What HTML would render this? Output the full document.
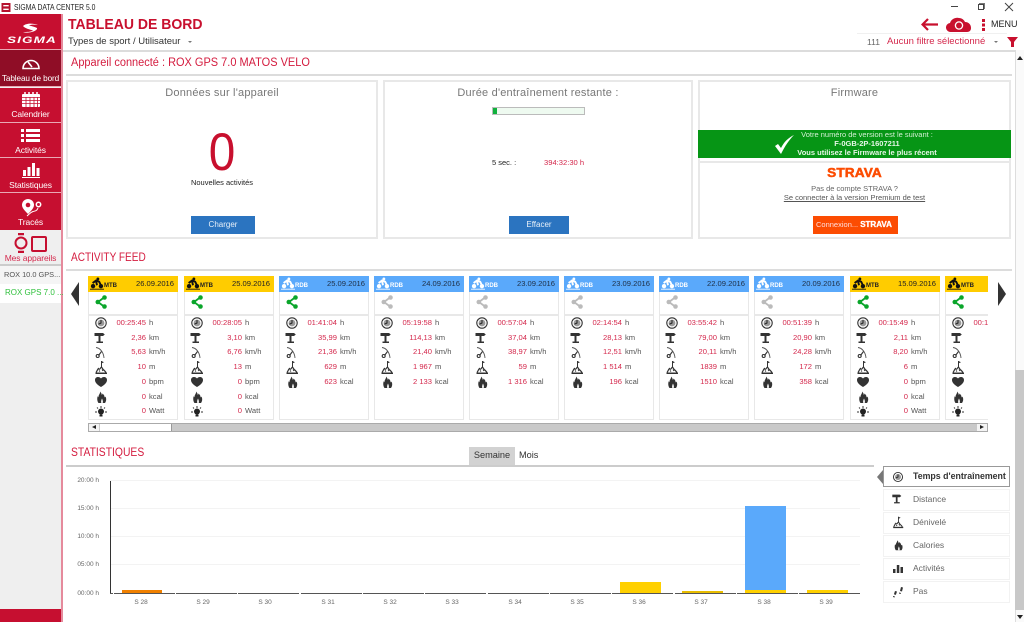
<!DOCTYPE html>
<html><head><meta charset="utf-8"><title>Sigma Data Center</title>
<style>
*{box-sizing:border-box}
html,body{margin:0;padding:0;width:1024px;height:622px;overflow:hidden;background:#fff;font-family:"Liberation Sans",sans-serif;color:#333}
.a{position:absolute}
.side{position:absolute;left:0;width:61px;background:#c60f30;color:#fff;font-size:8.5px;text-align:center;border-bottom:1px solid #e9a9b5}
.side span{position:absolute;left:0;right:0;bottom:2px;white-space:nowrap;letter-spacing:-.1px}
.side svg{position:absolute}
.panel{position:absolute;border:2px solid #e8e8e8;background:#fff}
.ptitle{position:absolute;left:0;right:0;top:5px;text-align:center;font-size:11px;color:#777;letter-spacing:.2px}
.btn{position:absolute;background:#2b74c0;color:#e8f0f8;font-size:8px;text-align:center;line-height:18px;height:18px;width:64px}
.hr{position:absolute;background:#dcdcdc;height:2px}
.h2{position:absolute;color:#d41c3f;font-size:11.5px;white-space:nowrap;transform-origin:0 0}
.card{position:absolute;top:0;width:90px;height:144px;border:1px solid #e8e8e8;border-top:0;background:#fff}
.card .hd{position:absolute;left:-1px;top:0;width:90px;height:16px;font-size:7.6px;color:#222}
.y{background:#ffcc00}.bl{background:#5aa9fb}
.bl .d{color:#1f2f45}
.hd .d{position:absolute;right:4px;top:3px}
.hd .t{position:absolute;left:16px;top:7px;font-size:6px;font-weight:bold}
.hd svg{position:absolute;left:2px;top:1px}
.sh{position:absolute;left:6px;top:19px}
.dv{position:absolute;left:-1px;width:90px;top:38px;height:2px;background:#e8e8e8}
.r{position:absolute;left:-1px;width:90px;height:14px;font-size:7.6px;line-height:14px}
.r svg{position:absolute;left:5px;top:-1px}
.r b{position:absolute;right:32px;font-weight:normal;color:#d4284c;white-space:nowrap}
.r i{position:absolute;left:61px;font-style:normal;color:#555;white-space:nowrap}
.r1{top:40px}.r2{top:55px}.r3{top:69px}.r4{top:84px}.r5{top:99px}.r6{top:114px}.r7{top:128px}
.yl{position:absolute;font-size:6.5px;color:#666;left:70px;width:29px;text-align:right}
.xl{position:absolute;font-size:6.5px;color:#666;top:599px;width:40px;text-align:center}
.gl{position:absolute;left:110px;width:750px;height:1px;background:#f3f3f3}
.base{position:absolute;top:592.5px;height:1.5px;background:#555;width:61px;z-index:2}
.m{position:absolute;left:883px;width:127px;height:22px;border:1px solid #f2f2f2;font-size:8.5px;color:#666;line-height:19px;padding-left:29px;background:#fff}
.m svg{position:absolute;left:7px;top:2px}
</style></head>
<body>
<svg width="0" height="0" style="position:absolute">
<defs>
<symbol id="clk" viewBox="0 0 16 16"><circle cx="8" cy="8" r="5.2" fill="none" stroke="#333" stroke-width="1.1"/><circle cx="8" cy="8" r="3.4" fill="#999"/><path d="M5.500 9.200L8 8V5" stroke="#222" stroke-width="1" fill="none"/></symbol>
<symbol id="sgn" viewBox="0 0 16 16"><path d="M1.500 3h8.500l1.800 1.500L10 6H7.500V11.500H10V13H3.500V11.500H5.500V6H1.500z" fill="#333"/></symbol>
<symbol id="gau" viewBox="0 0 16 16"><path d="M3 3.500C7 4 10.500 8 11 14" fill="none" stroke="#555" stroke-width=".9"/><path d="M5.500 11.500l3-4" stroke="#333" stroke-width="1.100"/><circle cx="4.700" cy="12" r="1.500" fill="none" stroke="#333" stroke-width="1.100"/></symbol>
<symbol id="ele" viewBox="0 0 16 16"><path d="M8.500 2v6" stroke="#333"/><path d="M8.500 2l2.500 1.200-2.500 1.200z" fill="#333"/><path d="M3 13.500c1-1 1.300-3 2.500-4 .7 1 1.200 1 1.800 0 .5-.8 1-1.500 1.200-1.500.8 1 1.300 2.300 2.300 3 .8.700 1.500 1.500 2.200 2.500" fill="none" stroke="#333" stroke-width="1.200"/><path d="M6 11.500l1 1M9 10.500l1 1.500" stroke="#333"/><path d="M2.500 13.500h11.500V15H2.500z" fill="#333"/></symbol>
<symbol id="hrt" viewBox="0 0 16 16"><path d="M8 13C4 10.500 2 8.500 2 6c0-2 1.500-3 3-3 1.200 0 2.300.500 3 1.500C8.700 3.500 9.800 3 11 3c1.500 0 3 1 3 3 0 2.500-2 4.500-6 7z" fill="#333"/></symbol>
<symbol id="flm" viewBox="0 0 16 16"><path d="M7 2.500c.5 2-1.500 3-1.500 5.500 0 .5-.5-.5-.8-.8C4 9 4 12 5.500 14h6.500c1.500-2 1.500-4.500.5-6.500-.3 1-1 1-1 .2 0-1.500-1.200-2.200-1.800-3.200-.3 1-1 1.500-1 1.500C9 5 8 3.500 7 2.500z" fill="#333"/><path d="M8.300 14c-.5-1.500 0-3 .7-4.500.7 1.500 1.200 3 .7 4.500z" fill="#fff"/></symbol>
<symbol id="blb" viewBox="0 0 16 16"><circle cx="8" cy="8.500" r="3" fill="#222"/><path d="M6.500 11.500h3v2h-3z" fill="#222"/><path d="M8 3v2M4 4.500l1 1M12 4.500l-1 1M2 9h2M12 9h2" stroke="#333" stroke-width="1"/></symbol>
<symbol id="bk" viewBox="0 0 16 14"><circle cx="3.500" cy="10" r="2.500" fill="#111"/><circle cx="12.500" cy="10" r="2.500" fill="#111"/><circle cx="9" cy="1.800" r="1.600" fill="#111"/><path d="M3 6.500L7 3.500l3.500 1.500 1.500 3M7 4.500L8 9" stroke="#111" stroke-width="2.200" fill="none"/><path d="M0 13h16v1H0z" fill="#111"/></symbol>
<symbol id="bkw" viewBox="0 0 16 14"><circle cx="3.500" cy="10" r="2.500" fill="#fff"/><circle cx="12.500" cy="10" r="2.500" fill="#fff"/><circle cx="9" cy="1.800" r="1.600" fill="#fff"/><path d="M3 6.500L7 3.500l3.500 1.500 1.500 3M7 4.500L8 9" stroke="#fff" stroke-width="2.200" fill="none"/><path d="M0 13h16v1H0z" fill="#fff"/></symbol>
<symbol id="shg" viewBox="0 0 12 14"><path d="M9 2.500L3 7l6 4.500" stroke="#0aa52a" stroke-width="1.800" fill="none"/><circle cx="9.500" cy="2.500" r="2.300" fill="#0aa52a"/><circle cx="2.800" cy="7" r="2.300" fill="#0aa52a"/><circle cx="9.500" cy="11.500" r="2.300" fill="#0aa52a"/></symbol>
<symbol id="shx" viewBox="0 0 12 14"><path d="M9 2.500L3 7l6 4.500" stroke="#bbb" stroke-width="1.800" fill="none"/><circle cx="9.500" cy="2.500" r="2.300" fill="#bbb"/><circle cx="2.800" cy="7" r="2.300" fill="#bbb"/><circle cx="9.500" cy="11.500" r="2.300" fill="#bbb"/></symbol>
</defs></svg>

<!-- title bar -->
<svg class="a" style="left:1px;top:3px" width="10" height="9" viewBox="0 0 10 10"><rect width="10" height="10" fill="#b5122e"/><path d="M2 3h6M2 7h6" stroke="#fff" stroke-width="1.500"/></svg>
<div class="a" style="left:14px;top:2px;font-size:8.300px;color:#222;white-space:nowrap;transform:scaleX(.82);transform-origin:0 0">SIGMA DATA CENTER 5.0</div>
<div class="a" style="left:951px;top:6px;width:7px;height:1px;background:#444"></div>
<div class="a" style="left:978px;top:4px;width:6px;height:6px;border:1px solid #444;box-shadow:1px -1px 0 #777"></div>
<svg class="a" style="left:1004px;top:2px" width="10" height="10"><path d="M1 1l8 8M9 1L1 9" stroke="#444"/></svg>

<!-- sidebar -->
<div class="a" style="left:0;top:14px;width:61px;height:608px;background:#efefef"></div>
<div class="a" style="left:61px;top:14px;width:2px;height:608px;background:#e58a9c"></div>
<div class="side" style="top:14px;height:36px">
<svg style="left:21px;top:8px" width="19" height="12" viewBox="0 0 19 12"><path d="M2 4c3-3 10-3 15-1-4-.5-7-.5-9 .5 3 .5 6 1.500 8 2.500 1 3-9 6-14 4 4 0 8 0 10-1.500-3-1-8-2-10-4.500z" fill="#fff"/></svg>
<div class="a" style="left:7px;top:21px;font-size:9.500px;font-weight:bold;font-style:italic;letter-spacing:.8px;transform:scaleX(1.420);transform-origin:0 0">SIGMA</div>
</div>
<div class="side" style="top:50px;height:37px;background:#8f0d26">
<svg style="left:21px;top:6px" width="20" height="14" viewBox="0 0 20 14"><path d="M2 12.500a8 8 0 0 1 16 0z" fill="none" stroke="#fff" stroke-width="1.600"/><path d="M7 6l4 5" stroke="#fff" stroke-width="1.600"/></svg>
<span style="bottom:3px;font-size:8.200px">Tableau de bord</span></div>
<div class="side" style="top:88px;height:35px">
<svg style="left:21px;top:4px" width="20" height="15" viewBox="0 0 20 15"><rect x="1" y="2" width="18" height="13" rx="1" fill="#fff"/><path d="M4 0v3M8 0v3M12 0v3M16 0v3" stroke="#fff" stroke-width="1.500"/><path d="M1 5.500h18M1 8.500h18M1 11.500h18M5 5v10M9 5v10M13 5v10M16.500 5v10" stroke="#c60f30" stroke-width=".8"/></svg>
<span style="bottom:3px">Calendrier</span></div>
<div class="side" style="top:123px;height:35px">
<svg style="left:21px;top:5px" width="19" height="14" viewBox="0 0 19 14"><path d="M0 1h3v3H0zM0 6h3v3H0zM0 11h3v3H0zM5 1h14v3H5zM5 6h14v3H5zM5 11h14v3H5z" fill="#fff"/></svg>
<span>Activités</span></div>
<div class="side" style="top:158px;height:35px">
<svg style="left:22px;top:4px" width="18" height="16" viewBox="0 0 18 16"><path d="M0 15h18v1H0zM1 8h3v6H1zM5.500 5h3v9h-3zM10 1h3v13h-3zM14.500 6h3v8h-3z" fill="#fff"/></svg>
<span>Statistiques</span></div>
<div class="side" style="top:193px;height:37px;border-bottom:0">
<svg style="left:20px;top:5px" width="22" height="20" viewBox="0 0 22 20"><path d="M8 1a6 6 0 0 1 6 6c0 3-3 6-6 9-3-3-6-6-6-9a6 6 0 0 1 6-6z" fill="#fff"/><circle cx="8" cy="7" r="2.300" fill="#c60f30"/><circle cx="18.500" cy="6.500" r="2.200" fill="none" stroke="#fff" stroke-width="1.500"/><path d="M18 10c-1 3-3 3-5 3.500-3 1-4 3-6 4.500" fill="none" stroke="#fff" stroke-width="1"/></svg>
<span style="bottom:3px">Tracés</span></div>
<div class="a" style="left:0;top:230px;width:61px;height:36px;background:#efefef;border-bottom:2px solid #ccc">
<svg class="a" style="left:14px;top:3px" width="34" height="20" viewBox="0 0 34 20"><circle cx="7" cy="10" r="5.500" fill="none" stroke="#c60f30" stroke-width="2"/><path d="M4 1h6M4 19h6" stroke="#c60f30" stroke-width="2.500"/><rect x="18" y="4" width="14" height="14" rx="1" fill="none" stroke="#c60f30" stroke-width="2"/></svg>
<div class="a" style="left:0;right:0;top:23px;text-align:center;font-size:8.500px;color:#d4284c;letter-spacing:-.1px;white-space:nowrap">Mes appareils</div>
</div>
<div class="a" style="left:0;top:266px;width:61px;height:18px;background:#f5f5f5;font-size:7.400px;line-height:18px;padding-left:4px;color:#555;white-space:nowrap">ROX 10.0 GPS...</div>
<div class="a" style="left:0;top:284px;width:61px;height:19px;background:#fff;font-size:8px;line-height:18px;padding-left:5px;color:#31c13e;white-space:nowrap">ROX GPS 7.0 ...</div>
<div class="a" style="left:0;top:609px;width:61px;height:13px;background:#c60f30"></div>

<!-- header -->
<div class="a" style="left:68px;top:16px;font-size:15px;font-weight:bold;color:#c8102e;white-space:nowrap;transform:scaleX(.935);transform-origin:0 0">TABLEAU DE BORD</div>
<div class="a" style="left:68px;top:36px;font-size:9.500px;color:#333;white-space:nowrap">Types de sport / Utilisateur</div>
<div class="a" style="left:188px;top:41px;width:0;height:0;border:2px solid transparent;border-top:2px solid #777"></div>
<svg class="a" style="left:921px;top:18px" width="17" height="13" viewBox="0 0 17 13"><path d="M7 1L1.500 6.500 7 12M2 6.500h15" fill="none" stroke="#c8102e" stroke-width="2.200"/></svg>
<svg class="a" style="left:946px;top:16px" width="26" height="17" viewBox="0 0 26 17"><path d="M5 16a4.500 4.500 0 0 1-1-9c1-4 6-6 9-5 3 0 5 2 6 4 4 0 6 3 6 6 0 2-1 4-4 4z" fill="#c8102e"/><circle cx="13" cy="9.500" r="3.600" fill="none" stroke="#fff" stroke-width="1.300"/></svg>
<div class="a" style="left:982px;top:19px;width:3px;height:3px;background:#c8102e;box-shadow:0 4.500px 0 #c8102e,0 9px 0 #c8102e"></div>
<div class="a" style="left:991px;top:19px;font-size:9px;color:#222">MENU</div>
<div class="a" style="left:857px;top:33px;width:150px;height:1px;background:#f0f0f0"></div>
<div class="a" style="left:867px;top:37px;font-size:8.500px;color:#666">111</div>
<div class="a" style="left:887px;top:36px;font-size:9.500px;line-height:11px;color:#d4284c;white-space:nowrap">Aucun filtre sélectionné</div>
<div class="a" style="left:994px;top:41px;width:0;height:0;border:2px solid transparent;border-top:2px solid #777"></div>
<svg class="a" style="left:1007px;top:37px" width="11" height="10" viewBox="0 0 11 10"><path d="M0 0h11L7 5v5H4V5z" fill="#c8102e"/></svg>
<div class="hr" style="left:63px;top:50px;width:952px"></div>

<!-- scrollbar -->
<div class="a" style="left:1015px;top:50px;width:9px;height:572px;background:#fafafa;border-left:1px solid #ddd"></div>
<div class="a" style="left:1015px;top:370px;width:9px;height:240px;background:#c8c8c8"></div>
<div class="a" style="left:1017px;top:53px;width:0;height:0;border:3px solid transparent;border-bottom:4px solid #222"></div>
<div class="a" style="left:1017px;top:615px;width:0;height:0;border:3px solid transparent;border-top:4px solid #222"></div>

<div class="h2" style="left:71px;top:57px;transform:scaleX(.955)">Appareil connecté : ROX GPS 7.0 MATOS VELO</div>
<div class="hr" style="left:66px;top:74px;width:946px"></div>

<!-- panels -->
<div class="panel" style="left:66px;top:80px;width:312px;height:159px">
<div class="ptitle">Données sur l'appareil</div>
<div class="a" style="left:0;right:0;top:41px;text-align:center;font-size:53px;line-height:60px;color:#c8102e;transform:scaleX(.9)">0</div>
<div class="a" style="left:0;right:0;top:96px;text-align:center;font-size:7.500px;color:#222">Nouvelles activités</div>
<div class="btn" style="left:123px;top:134px">Charger</div>
</div>
<div class="panel" style="left:383px;top:80px;width:310px;height:159px">
<div class="ptitle">Durée d'entraînement restante :</div>
<div class="a" style="left:107px;top:25px;width:93px;height:8px;background:#eefaf0;border:1px solid #bbb"><div style="width:4px;height:6px;background:#10b13c"></div></div>
<div class="a" style="left:107px;top:76px;font-size:7.500px;color:#222">5 sec. :</div>
<div class="a" style="left:159px;top:76px;font-size:7.600px;color:#d4284c;white-space:nowrap">394:32:30 h</div>
<div class="btn" style="left:124px;top:134px;width:60px">Effacer</div>
</div>
<div class="panel" style="left:698px;top:80px;width:313px;height:159px;border-bottom-width:1px"><div class="ptitle">Firmware</div></div>
<div class="a" style="left:698px;top:130px;width:313px;height:28px;background:#069515;color:#e6f6e6;font-size:7.500px;text-align:center;line-height:9px;padding:0 0 0 25px;white-space:nowrap">
<div style="color:#d4f0d4">Votre numéro de version est le suivant :</div><div style="font-weight:bold">F-0GB-2P-1607211</div><div style="font-weight:bold">Vous utilisez le Firmware le plus récent</div></div>
<svg class="a" style="left:774px;top:134px" width="21" height="20" viewBox="0 0 21 20"><path d="M1 12l3-2 3 4C10 8 14 4 20 1 15 6 11 12 7 20z" fill="#fff"/></svg>
<div class="panel" style="left:698px;top:161px;width:313px;height:78px">
<div class="a" style="left:0;right:0;top:2px;text-align:center;font-size:13px;line-height:15px;font-weight:bold;color:#fc4c02;-webkit-text-stroke:.5px #fc4c02;letter-spacing:.1px;transform:scaleX(1.050)">STRAVA</div>
<div class="a" style="left:0;right:0;top:21px;text-align:center;font-size:7.500px;color:#666">Pas de compte STRAVA ?</div>
<div class="a" style="left:0;right:0;top:30px;text-align:center;font-size:7.500px;color:#555;text-decoration:underline">Se connecter à la version Premium de test</div>
<div class="a" style="left:113px;top:53px;width:85px;height:18px;background:#fc4c02;color:#fdd;font-size:7.500px;line-height:18px;white-space:nowrap;padding-left:3px">Connexion... <b style="color:#fff;font-size:8px;-webkit-text-stroke:.3px #fff">STRAVA</b></div>
</div>

<!-- feed -->
<div class="h2" style="left:71px;top:252px;transform:scaleX(.875)">ACTIVITY FEED</div>
<div class="hr" style="left:66px;top:269px;width:946px"></div>
<div class="a" style="left:71px;top:282px;width:0;height:0;border:12px solid transparent;border-left:0;border-right:8px solid #333"></div>
<div class="a" style="left:998px;top:282px;width:0;height:0;border:12px solid transparent;border-right:0;border-left:8px solid #333"></div>

<div class="a" style="left:88px;top:276px;width:900px;height:145px;overflow:hidden">
<div class="card" style="left:0"><div class="hd y"><svg width="14" height="13"><use href="#bk"/></svg><span class="t">MTB</span><span class="d">26.09.2016</span></div><svg class="sh" width="12" height="14"><use href="#shg"/></svg><div class="dv"></div>
<div class="r r1"><svg width="16" height="16"><use href="#clk"/></svg><b>00:25:45</b><i>h</i></div>
<div class="r r2"><svg width="16" height="16"><use href="#sgn"/></svg><b>2,36</b><i>km</i></div>
<div class="r r3"><svg width="16" height="16"><use href="#gau"/></svg><b>5,63</b><i>km/h</i></div>
<div class="r r4"><svg width="16" height="16"><use href="#ele"/></svg><b>10</b><i>m</i></div>
<div class="r r5"><svg width="16" height="16"><use href="#hrt"/></svg><b>0</b><i>bpm</i></div>
<div class="r r6"><svg width="16" height="16"><use href="#flm"/></svg><b>0</b><i>kcal</i></div>
<div class="r r7"><svg width="16" height="16"><use href="#blb"/></svg><b>0</b><i>Watt</i></div></div>

<div class="card" style="left:96px"><div class="hd y"><svg width="14" height="13"><use href="#bk"/></svg><span class="t">MTB</span><span class="d">25.09.2016</span></div><svg class="sh" width="12" height="14"><use href="#shg"/></svg><div class="dv"></div>
<div class="r r1"><svg width="16" height="16"><use href="#clk"/></svg><b>00:28:05</b><i>h</i></div>
<div class="r r2"><svg width="16" height="16"><use href="#sgn"/></svg><b>3,10</b><i>km</i></div>
<div class="r r3"><svg width="16" height="16"><use href="#gau"/></svg><b>6,76</b><i>km/h</i></div>
<div class="r r4"><svg width="16" height="16"><use href="#ele"/></svg><b>13</b><i>m</i></div>
<div class="r r5"><svg width="16" height="16"><use href="#hrt"/></svg><b>0</b><i>bpm</i></div>
<div class="r r6"><svg width="16" height="16"><use href="#flm"/></svg><b>0</b><i>kcal</i></div>
<div class="r r7"><svg width="16" height="16"><use href="#blb"/></svg><b>0</b><i>Watt</i></div></div>

<div class="card" style="left:191px"><div class="hd bl"><svg width="14" height="13"><use href="#bkw"/></svg><span class="t" style="color:#fff">RDB</span><span class="d">25.09.2016</span></div><svg class="sh" width="12" height="14"><use href="#shg"/></svg><div class="dv"></div>
<div class="r r1"><svg width="16" height="16"><use href="#clk"/></svg><b>01:41:04</b><i>h</i></div>
<div class="r r2"><svg width="16" height="16"><use href="#sgn"/></svg><b>35,99</b><i>km</i></div>
<div class="r r3"><svg width="16" height="16"><use href="#gau"/></svg><b>21,36</b><i>km/h</i></div>
<div class="r r4"><svg width="16" height="16"><use href="#ele"/></svg><b>629</b><i>m</i></div>
<div class="r r5"><svg width="16" height="16"><use href="#flm"/></svg><b>623</b><i>kcal</i></div></div>

<div class="card" style="left:286px"><div class="hd bl"><svg width="14" height="13"><use href="#bkw"/></svg><span class="t" style="color:#fff">RDB</span><span class="d">24.09.2016</span></div><svg class="sh" width="12" height="14"><use href="#shx"/></svg><div class="dv"></div>
<div class="r r1"><svg width="16" height="16"><use href="#clk"/></svg><b>05:19:58</b><i>h</i></div>
<div class="r r2"><svg width="16" height="16"><use href="#sgn"/></svg><b>114,13</b><i>km</i></div>
<div class="r r3"><svg width="16" height="16"><use href="#gau"/></svg><b>21,40</b><i>km/h</i></div>
<div class="r r4"><svg width="16" height="16"><use href="#ele"/></svg><b>1 967</b><i>m</i></div>
<div class="r r5"><svg width="16" height="16"><use href="#flm"/></svg><b>2 133</b><i>kcal</i></div></div>

<div class="card" style="left:381px"><div class="hd bl"><svg width="14" height="13"><use href="#bkw"/></svg><span class="t" style="color:#fff">RDB</span><span class="d">23.09.2016</span></div><svg class="sh" width="12" height="14"><use href="#shx"/></svg><div class="dv"></div>
<div class="r r1"><svg width="16" height="16"><use href="#clk"/></svg><b>00:57:04</b><i>h</i></div>
<div class="r r2"><svg width="16" height="16"><use href="#sgn"/></svg><b>37,04</b><i>km</i></div>
<div class="r r3"><svg width="16" height="16"><use href="#gau"/></svg><b>38,97</b><i>km/h</i></div>
<div class="r r4"><svg width="16" height="16"><use href="#ele"/></svg><b>59</b><i>m</i></div>
<div class="r r5"><svg width="16" height="16"><use href="#flm"/></svg><b>1 316</b><i>kcal</i></div></div>

<div class="card" style="left:476px"><div class="hd bl"><svg width="14" height="13"><use href="#bkw"/></svg><span class="t" style="color:#fff">RDB</span><span class="d">23.09.2016</span></div><svg class="sh" width="12" height="14"><use href="#shx"/></svg><div class="dv"></div>
<div class="r r1"><svg width="16" height="16"><use href="#clk"/></svg><b>02:14:54</b><i>h</i></div>
<div class="r r2"><svg width="16" height="16"><use href="#sgn"/></svg><b>28,13</b><i>km</i></div>
<div class="r r3"><svg width="16" height="16"><use href="#gau"/></svg><b>12,51</b><i>km/h</i></div>
<div class="r r4"><svg width="16" height="16"><use href="#ele"/></svg><b>1 514</b><i>m</i></div>
<div class="r r5"><svg width="16" height="16"><use href="#flm"/></svg><b>196</b><i>kcal</i></div></div>

<div class="card" style="left:571px"><div class="hd bl"><svg width="14" height="13"><use href="#bkw"/></svg><span class="t" style="color:#fff">RDB</span><span class="d">22.09.2016</span></div><svg class="sh" width="12" height="14"><use href="#shx"/></svg><div class="dv"></div>
<div class="r r1"><svg width="16" height="16"><use href="#clk"/></svg><b>03:55:42</b><i>h</i></div>
<div class="r r2"><svg width="16" height="16"><use href="#sgn"/></svg><b>79,00</b><i>km</i></div>
<div class="r r3"><svg width="16" height="16"><use href="#gau"/></svg><b>20,11</b><i>km/h</i></div>
<div class="r r4"><svg width="16" height="16"><use href="#ele"/></svg><b>1839</b><i>m</i></div>
<div class="r r5"><svg width="16" height="16"><use href="#flm"/></svg><b>1510</b><i>kcal</i></div></div>

<div class="card" style="left:666px"><div class="hd bl"><svg width="14" height="13"><use href="#bkw"/></svg><span class="t" style="color:#fff">RDB</span><span class="d">20.09.2016</span></div><svg class="sh" width="12" height="14"><use href="#shx"/></svg><div class="dv"></div>
<div class="r r1"><svg width="16" height="16"><use href="#clk"/></svg><b>00:51:39</b><i>h</i></div>
<div class="r r2"><svg width="16" height="16"><use href="#sgn"/></svg><b>20,90</b><i>km</i></div>
<div class="r r3"><svg width="16" height="16"><use href="#gau"/></svg><b>24,28</b><i>km/h</i></div>
<div class="r r4"><svg width="16" height="16"><use href="#ele"/></svg><b>172</b><i>m</i></div>
<div class="r r5"><svg width="16" height="16"><use href="#flm"/></svg><b>358</b><i>kcal</i></div></div>

<div class="card" style="left:762px"><div class="hd y"><svg width="14" height="13"><use href="#bk"/></svg><span class="t">MTB</span><span class="d">15.09.2016</span></div><svg class="sh" width="12" height="14"><use href="#shg"/></svg><div class="dv"></div>
<div class="r r1"><svg width="16" height="16"><use href="#clk"/></svg><b>00:15:49</b><i>h</i></div>
<div class="r r2"><svg width="16" height="16"><use href="#sgn"/></svg><b>2,11</b><i>km</i></div>
<div class="r r3"><svg width="16" height="16"><use href="#gau"/></svg><b>8,20</b><i>km/h</i></div>
<div class="r r4"><svg width="16" height="16"><use href="#ele"/></svg><b>6</b><i>m</i></div>
<div class="r r5"><svg width="16" height="16"><use href="#hrt"/></svg><b>0</b><i>bpm</i></div>
<div class="r r6"><svg width="16" height="16"><use href="#flm"/></svg><b>0</b><i>kcal</i></div>
<div class="r r7"><svg width="16" height="16"><use href="#blb"/></svg><b>0</b><i>Watt</i></div></div>

<div class="card" style="left:857px"><div class="hd y"><svg width="14" height="13"><use href="#bk"/></svg><span class="t">MTB</span></div><svg class="sh" width="12" height="14"><use href="#shg"/></svg><div class="dv"></div>
<div class="r r1"><svg width="16" height="16"><use href="#clk"/></svg><b>00:15:49</b></div>
<div class="r r2"><svg width="16" height="16"><use href="#sgn"/></svg><b>2,11</b></div>
<div class="r r3"><svg width="16" height="16"><use href="#gau"/></svg><b>8,20</b></div>
<div class="r r4"><svg width="16" height="16"><use href="#ele"/></svg></div>
<div class="r r5"><svg width="16" height="16"><use href="#hrt"/></svg></div>
<div class="r r6"><svg width="16" height="16"><use href="#flm"/></svg></div>
<div class="r r7"><svg width="16" height="16"><use href="#blb"/></svg></div></div>
</div>

<!-- h scrollbar -->
<div class="a" style="left:88px;top:423px;width:900px;height:9px;background:#c9c9c9;border:1px solid #aaa"></div>
<div class="a" style="left:89px;top:424px;width:83px;height:7px;background:#fff;border-right:1px solid #999"></div>
<div class="a" style="left:89px;top:424px;width:11px;height:7px;background:#f4f4f4;border-right:1px solid #ccc"></div>
<div class="a" style="left:92px;top:425px;width:0;height:0;border:2.500px solid transparent;border-left:0;border-right:4px solid #222"></div>
<div class="a" style="left:977px;top:424px;width:10px;height:7px;background:#f4f4f4"></div>
<div class="a" style="left:980px;top:425px;width:0;height:0;border:2.500px solid transparent;border-right:0;border-left:4px solid #222"></div>

<!-- stats -->
<div class="h2" style="left:71px;top:447px;transform:scaleX(.9)">STATISTIQUES</div>
<div class="hr" style="left:66px;top:465px;width:808px;background:#ccc;height:1.500px"></div>
<div class="a" style="left:469px;top:447px;width:46px;height:18px;background:#d2d2d2;font-size:9.200px;line-height:17px;text-align:center;color:#333">Semaine</div>
<div class="a" style="left:519px;top:447px;font-size:9.200px;line-height:17px;color:#333">Mois</div>

<div class="yl" style="top:477px">20:00 h</div><div class="yl" style="top:505px">15:00 h</div><div class="yl" style="top:533px">10:00 h</div><div class="yl" style="top:561px">05:00 h</div><div class="yl" style="top:590px">00:00 h</div>
<div class="gl" style="top:480px"></div><div class="gl" style="top:508px"></div><div class="gl" style="top:536px"></div><div class="gl" style="top:564px"></div>
<div class="a" style="left:110px;top:481px;width:1.300px;height:113px;background:#333"></div>
<div class="base" style="left:110px;width:3px"></div>
<div class="base" style="left:114px"></div><div class="base" style="left:176px"></div><div class="base" style="left:238px"></div><div class="base" style="left:301px"></div><div class="base" style="left:363px"></div><div class="base" style="left:425px"></div><div class="base" style="left:488px"></div><div class="base" style="left:550px"></div><div class="base" style="left:612px"></div><div class="base" style="left:675px"></div><div class="base" style="left:737px"></div><div class="base" style="left:799px"></div>
<div class="a" style="left:122px;top:590px;width:40px;height:3px;background:#f08000"></div>
<div class="a" style="left:620px;top:582px;width:41px;height:11px;background:#ffd000"></div>
<div class="a" style="left:682px;top:591px;width:41px;height:2px;background:#e8bd00"></div>
<div class="a" style="left:745px;top:506px;width:41px;height:84px;background:#5aa9fb"></div>
<div class="a" style="left:745px;top:590px;width:41px;height:3px;background:#ffd000"></div>
<div class="a" style="left:807px;top:590px;width:41px;height:3px;background:#ffd000"></div>
<div class="xl" style="left:121px">S 28</div><div class="xl" style="left:183px">S 29</div><div class="xl" style="left:245px">S 30</div><div class="xl" style="left:308px">S 31</div><div class="xl" style="left:370px">S 32</div><div class="xl" style="left:432px">S 33</div><div class="xl" style="left:495px">S 34</div><div class="xl" style="left:557px">S 35</div><div class="xl" style="left:619px">S 36</div><div class="xl" style="left:681px">S 37</div><div class="xl" style="left:744px">S 38</div><div class="xl" style="left:806px">S 39</div>

<!-- right menu -->
<div class="a" style="left:877px;top:470px;width:0;height:0;border:7px solid transparent;border-left:0;border-right:6px solid #777"></div>
<div class="m" style="top:466px;height:21px;border:1px solid #999;color:#333;font-weight:bold;white-space:nowrap;font-size:8.800px;padding-left:29px"><svg width="14" height="14" style="left:7px;top:3px"><use href="#clk"/></svg>Temps d'entraînement</div>
<div class="m" style="top:489px"><svg width="14" height="14"><use href="#sgn"/></svg>Distance</div>
<div class="m" style="top:512px"><svg width="14" height="14"><use href="#ele"/></svg>Dénivelé</div>
<div class="m" style="top:535px"><svg width="14" height="14"><use href="#flm"/></svg>Calories</div>
<div class="m" style="top:558px"><svg width="14" height="14" viewBox="0 0 14 14"><path d="M2 8h2.500v4H2zM5.800 4h2.500v8H5.800zM9.500 6H12v6H9.500z" fill="#333"/></svg>Activités</div>
<div class="m" style="top:581px"><svg width="14" height="14" viewBox="0 0 14 14"><path d="M4 7l2 .5-1 3-1 .5-1-1zM10 3l2 .5-1 4-2-.5z" fill="#333"/><path d="M2 12l2 .5-.5 1-1.500-.5zM8 8.500l2 .5-.5 1-1.500-.5z" fill="#333"/></svg>Pas</div>
</body></html>
